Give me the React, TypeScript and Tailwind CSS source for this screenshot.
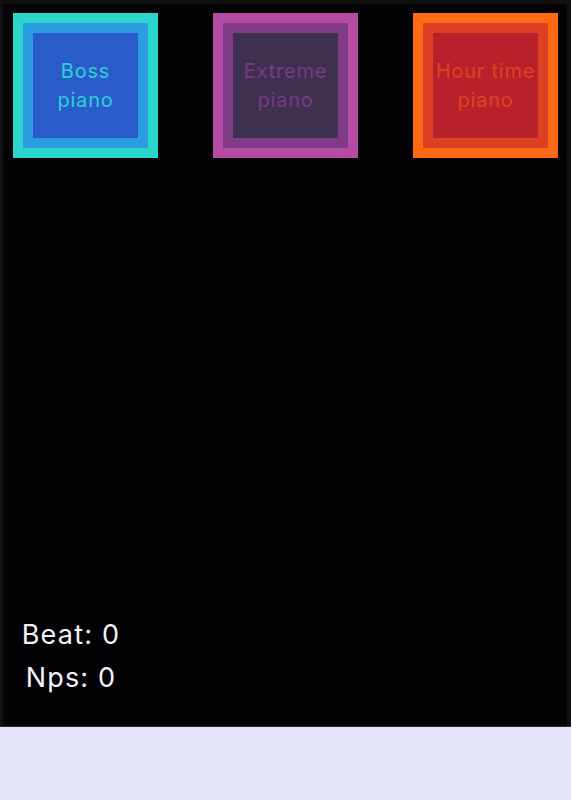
import React from "react";

const boxes = [
  { l1: "Boss", l2: "piano", outer: "bg-[#2bd5cc]", mid: "bg-[#2a9ce0]", inner: "bg-[#2a5cc9]", text: "text-[#2bd0d6]" },
  { l1: "Extreme", l2: "piano", outer: "bg-[#b64ba4]", mid: "bg-[#7f3b86]", inner: "bg-[#3e3150]", text: "text-[#7b3a82]" },
  { l1: "Hour time", l2: "piano", outer: "bg-[#fd6a12]", mid: "bg-[#dc4022]", inner: "bg-[#b8212c]", text: "text-[#e1421f]" },
];

export default function App() {
  return (
    <div className="w-[571px] h-[800px] bg-[#e6e6fa]" style={{ fontFamily: "Inter, 'Noto Sans', sans-serif" }}>
      <div className="h-[727px] bg-[#101010] pt-[4px] pl-[3px] pr-[4px] border-b border-[#2a2a30]">
        <div className="h-full bg-[#030205] flex flex-col justify-between pt-[9px] pl-[10px] pr-[9px] pb-[27px]">
          <div className="flex justify-between">
            {boxes.map((b, i) => (
              <div key={i} className={`w-[145px] h-[145px] p-[10px] ${b.outer}`}>
                <div className={`w-full h-full p-[10px] ${b.mid}`}>
                  <div className={`w-full h-full ${b.inner} flex flex-col items-center justify-center text-[20px] leading-[29px] tracking-[0.8px] ${b.text}`}>
                    <span className="whitespace-nowrap">{b.l1}</span>
                    <span>{b.l2}</span>
                  </div>
                </div>
              </div>
            ))}
          </div>
          <div className="w-[136px] -ml-[10px] text-center text-[27px] leading-[43px] tracking-[1.2px] text-[#f2f2f7]">
            <div>Beat: 0</div>
            <div>Nps: 0</div>
          </div>
        </div>
      </div>
    </div>
  );
}
